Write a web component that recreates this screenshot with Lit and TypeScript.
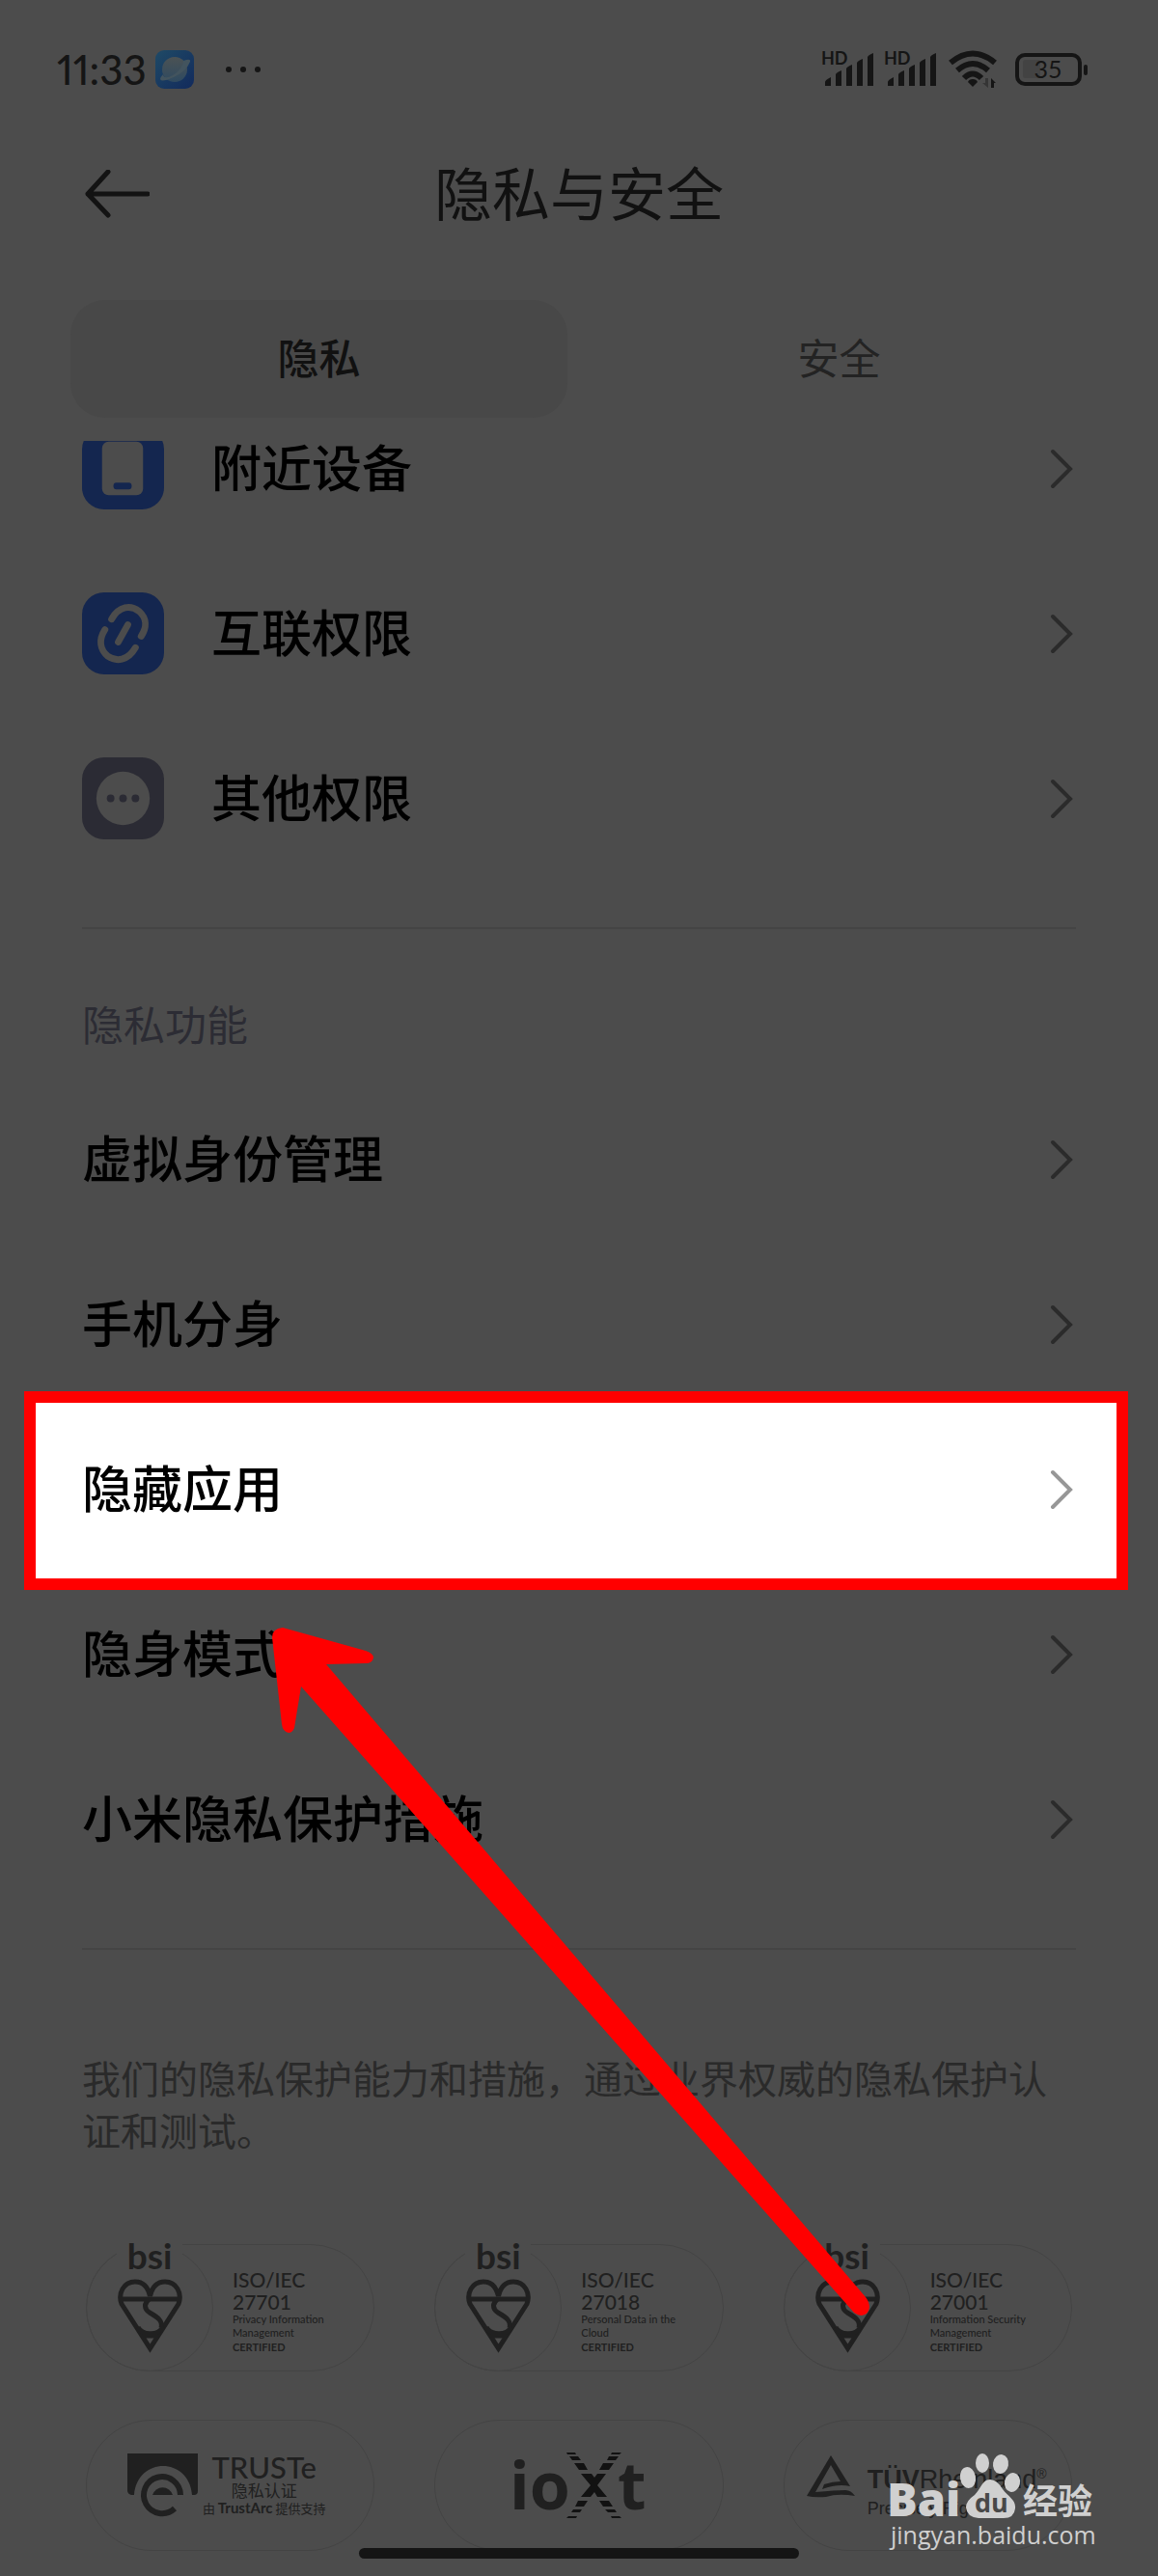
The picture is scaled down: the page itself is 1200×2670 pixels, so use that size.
import { LitElement, html, css, svg } from "lit";
import { customElement, property } from "lit/decorators.js";

const chevron = html`<svg class="chevron" viewBox="0 0 24 42" aria-hidden="true">
  <path d="M3 3 L21 21 L3 39" fill="none" stroke="currentColor" stroke-width="4" stroke-linecap="round" />
</svg>`;

const signal = svg`
  <path d="M3 35 V31 Q3 29 9 26 V35 Z M14 35 V23 Q15 21 20 19 V35 Z M25 35 V17 Q26 15 31 13 V35 Z M36 35 V11 Q37 9 42 7 V35 Z M47 35 V5 Q48 3 53 1 V35 Z" />`;

@customElement("status-bar")
export class StatusBar extends LitElement {
  static styles = css`
    :host {
      display: flex;
      align-items: center;
      justify-content: space-between;
      height: 40px;
      padding: 52px 72px 0 59px;
      color: #151515;
    }
    .left,
    .right {
      display: flex;
      align-items: center;
    }
    .time {
      font: 500 42px/40px Lato, sans-serif;
      font-variant-numeric: proportional-nums;
    }
    .app {
      width: 40px;
      height: 40px;
      margin: 0 32px 0 9px;
    }
    .dots {
      width: 38px;
      height: 8px;
    }
    .right {
      gap: 9px;
    }
    .battery {
      margin-left: 9px;
    }
    svg {
      display: block;
      overflow: visible;
      fill: currentColor;
    }
    text {
      font-family: Lato, sans-serif;
    }
  `;

  private cell() {
    return html`<svg width="56" height="38" viewBox="0 -1 56 38" role="img" aria-label="HD">
      <text x="-1" y="13" font-size="18" font-weight="700">HD</text>
      ${signal}
    </svg>`;
  }

  render() {
    return html`
      <div class="left">
        <span class="time">11:33</span>
        <svg class="app" viewBox="0 0 40 40" aria-hidden="true">
          <defs>
            <linearGradient id="g" x1="0" y1="0" x2="1" y2="1">
              <stop offset="0" stop-color="#1f4a66" />
              <stop offset="1" stop-color="#122a5c" />
            </linearGradient>
            <linearGradient id="p" x1="0" y1="0" x2="0" y2="1">
              <stop offset="0" stop-color="#4b5254" />
              <stop offset="1" stop-color="#2f4a60" />
            </linearGradient>
          </defs>
          <rect width="40" height="40" rx="9" fill="url(#g)" />
          <circle cx="20" cy="20" r="13" fill="url(#p)" />
          <path d="M29 11 Q37 8 36 12 Q32 22 19 28 Q6 34 5 30 Q5 28 8 25 Q9 31 18 26 Q28 20 29 11Z" fill="#43545e" />
        </svg>
        <svg class="dots" viewBox="0 0 38 8" aria-hidden="true">
          <circle cx="4" cy="4" r="3" /><circle cx="19" cy="4" r="3" /><circle cx="34" cy="4" r="3" />
        </svg>
      </div>
      <div class="right">
        ${this.cell()} ${this.cell()}
        <svg width="52" height="42" viewBox="0 0 52 42" aria-hidden="true">
          <g fill="none" stroke="currentColor" stroke-width="6">
            <path d="M3 14 Q26 -5 49 14" />
            <path d="M10 22 Q26 8 42 22" />
            <path d="M17 30 Q26 21 35 30" />
          </g>
          <path d="M26 31 Q30 31 31 34 L26 39 L21 34 Q22 31 26 31Z" />
          <path d="M45 40 V30 L50 35 H48 V40Z" />
          <path d="M42 30 V40 L36 35 H39 V30Z" fill="#353535" />
        </svg>
        <svg class="battery" width="76" height="36" viewBox="0 0 76 36" role="img" aria-label="35%">
          <rect x="8" y="8" width="18" height="19" rx="3" fill="#434343" />
          <rect x="2" y="3" width="65" height="30" rx="8" fill="none" stroke="currentColor" stroke-width="4" />
          <rect x="71" y="13" width="4" height="11" rx="2" />
          <text x="34" y="27" font-size="25" text-anchor="middle">35</text>
        </svg>
      </div>
    `;
  }
}

@customElement("setting-row")
export class SettingRow extends LitElement {
  @property() label = "";
  @property() icon = "";
  @property({ type: Boolean, reflect: true }) focused = false;

  static styles = css`
    :host {
      display: block;
    }
    .row {
      position: relative;
      display: flex;
      align-items: center;
      width: 100%;
      height: 171px;
      padding: 0 88px 0 85px;
      border: 0;
      background: none;
      color: #000;
      font: 500 52px/72px "Noto Sans CJK SC", sans-serif;
      text-align: left;
      cursor: pointer;
    }
    .label {
      flex: 1;
      padding-bottom: 6px;
    }
    .icon {
      width: 85px;
      height: 85px;
      margin-right: 49px;
      flex: none;
    }
    .chevron {
      width: 24px;
      height: 42px;
      color: #2b2b2b;
    }
    :host([focused]) .chevron {
      color: #979797;
    }
    :host([focused]) .row::before {
      content: "";
      position: absolute;
      z-index: -1;
      inset: -16px 31px -19px 25px;
      border: 12px solid #f00;
      background: #fff;
    }
  `;

  private glyph() {
    if (this.icon === "device")
      return html`<svg class="icon" viewBox="0 0 86 86" aria-hidden="true">
        <rect width="86" height="86" rx="23" fill="#14264f" />
        <rect x="21" y="15" width="43" height="56" rx="7" fill="#4c4c4c" />
        <rect x="33" y="58" width="19" height="7" rx="3" fill="#14264f" />
      </svg>`;
    if (this.icon === "link")
      return html`<svg class="icon" viewBox="0 0 86 86" aria-hidden="true">
        <rect width="86" height="86" rx="23" fill="#14264f" />
        <g fill="none" stroke="#4c4c4c" stroke-width="7" stroke-linecap="round">
          <path d="M31 28 C39 14 51 13 60 20 C68 27 68 37 62 46" />
          <path d="M24 39 C17 50 19 60 27 67 C36 73 48 72 56 58" />
          <path d="M48 34 L38 52" />
        </g>
      </svg>`;
    if (this.icon === "more")
      return html`<svg class="icon" viewBox="0 0 86 86" aria-hidden="true">
        <rect width="86" height="86" rx="23" fill="#2b2b34" />
        <circle cx="43" cy="43" r="28" fill="#4c4c4c" />
        <g fill="#2b2b34"><circle cx="30" cy="43" r="4" /><circle cx="43" cy="43" r="4" /><circle cx="56" cy="43" r="4" /></g>
      </svg>`;
    return "";
  }

  render() {
    return html`<button class="row">${this.glyph()}<span class="label">${this.label}</span>${chevron}</button>`;
  }
}

@customElement("cert-badge")
export class CertBadge extends LitElement {
  @property() number = "";
  @property() scope = "";

  static styles = css`
    :host {
      position: relative;
      display: flex;
      height: 132px;
      box-sizing: border-box;
      border: 1px solid #444;
      border-radius: 66px;
      color: #202020;
    }
    .mark {
      position: relative;
      width: 132px;
      height: 132px;
      margin: -1px;
      box-sizing: border-box;
      border: 1px solid #444;
      border-radius: 50%;
      flex: none;
    }
    .bsi {
      position: absolute;
      left: 31px;
      top: -10px;
      width: 68px;
      text-align: center;
      background: #4c4c4c;
      font: 700 37px/42px Lato, sans-serif;
    }
    .heart {
      position: absolute;
      left: 32px;
      top: 35px;
      width: 67px;
      height: 78px;
    }
    .copy {
      padding: 24px 0 0 21px;
      font: 500 11px/14px Lato, sans-serif;
      white-space: pre-line;
    }
    .name {
      margin: 0;
      font-size: 21px;
      line-height: 23px;
      font-weight: 500;
    }
    .certified {
      font-weight: 700;
      line-height: 16px;
    }
  `;

  render() {
    return html`
      <div class="mark">
        <span class="bsi">bsi</span>
        <svg class="heart" viewBox="0 0 67 78" fill="none" stroke="currentColor" stroke-width="5" aria-hidden="true">
          <path d="M33.500 18 C31 7 25 3 18 3 C6 3 0 15 4 26 L33.500 72 L63 26 C67 15 61 3 49 3 C42 3 36 7 33.500 18Z" />
          <path d="M3 21 H64 M33 21 C27 25 27 31 33 35 C42 40 47 44 45 51 M21 50 C25 58 41 60 47 50 M26 59 H41" />
        </svg>
      </div>
      <div class="copy"><p class="name">ISO/IEC
${this.number}</p><div>${this.scope}</div><div class="certified">CERTIFIED</div></div>
    `;
  }
}

@customElement("app-root")
export class AppRoot extends LitElement {
  static styles = css`
    :host {
      position: relative;
      display: block;
      overflow: hidden;
      isolation: isolate;
      background: #4c4c4c;
      font-family: "Noto Sans CJK SC", sans-serif;
      color: #111;
    }
    .header {
      display: grid;
      grid-template-columns: 68px 1fr 68px;
      align-items: center;
      height: 88px;
      margin: 65px 87px 66px;
    }
    .back {
      padding: 0;
      border: 0;
      background: none;
      color: #131313;
    }
    .back svg {
      display: block;
    }
    .title {
      margin: 0;
      padding-bottom: 6px;
      font-size: 60px;
      line-height: 82px;
      font-weight: 400;
      text-align: center;
    }
    .tabs {
      display: grid;
      grid-template-columns: 1fr 1fr;
      gap: 24px;
      margin: 0 73px;
    }
    .tab {
      height: 122px;
      padding: 0 0 6px;
      border: 0;
      border-radius: 36px;
      background: none;
      font: 400 43px/60px "Noto Sans CJK SC", sans-serif;
      color: #232323;
    }
    .tab[aria-selected="true"] {
      background: #484848;
      color: #111;
      font-weight: 500;
    }
    .scroller {
      margin-top: 24px;
      padding-bottom: 26px;
      overflow: hidden;
    }
    .permissions {
      margin-top: -57px;
    }
    .rule {
      height: 2px;
      margin: 48px 85px 0;
      border: 0;
      background: #444;
    }
    .section {
      margin: 67px 85px 26px;
      font-size: 43px;
      line-height: 60px;
      font-weight: 400;
      color: #2c2c34;
    }
    .note {
      margin: 105px 85px 92px;
      font-size: 40px;
      line-height: 54px;
      color: #2a2a2a;
    }
    .badges {
      display: grid;
      grid-template-columns: repeat(3, minmax(0, 1fr));
      gap: 50px 62px;
      margin: 0 89px;
    }
    .badge {
      display: flex;
      align-items: center;
      justify-content: center;
      height: 136px;
      box-sizing: border-box;
      border: 1px solid #444;
      border-radius: 68px;
      color: #202020;
    }
    .badge svg {
      overflow: visible;
      flex: none;
    }
    .truste {
      gap: 5px;
      padding-right: 8px;
    }
    .truste-copy {
      text-align: center;
      font-size: 13px;
      line-height: 19px;
      white-space: nowrap;
    }
    .truste-copy .brand {
      font: 500 31px/28px Lato, sans-serif;
    }
    .truste-copy .mid {
      font-size: 17px;
    }
    .arc {
      font: 700 15px/19px Lato, sans-serif;
    }
    .ioxt text {
      font: 700 68px "Open Sans", sans-serif;
    }
    .tuv {
      align-items: flex-start;
      justify-content: flex-start;
      gap: 13px;
      padding: 36px 0 0 23px;
      font: 400 27px/30px "Liberation Sans", sans-serif;
      white-space: nowrap;
    }
    .tuv-copy {
      padding-top: 10px;
    }
    .tuv .small {
      font-size: 18px;
    }
    .tuv sup {
      font-size: 14px;
      line-height: 0;
    }
    .arrow {
      position: absolute;
      left: 281px;
      top: 1687px;
      width: 624px;
      height: 716px;
      pointer-events: none;
    }
    .home {
      position: absolute;
      left: 31%;
      right: 31%;
      bottom: 18px;
      height: 11px;
      border-radius: 6px;
      background: #151515;
    }
    .watermark {
      position: absolute;
      right: 62px;
      bottom: 26px;
      width: 216px;
      height: 112px;
      overflow: visible;
    }
  `;

  render() {
    return html`
      <status-bar></status-bar>
      <header class="header">
        <button class="back" aria-label="返回">
          <svg width="68" height="50" viewBox="0 0 68 50" fill="none" stroke="currentColor" stroke-width="5" stroke-linecap="round" stroke-linejoin="round">
            <path d="M25 2 L4 25 L25 47 M4 25 H66" />
          </svg>
        </button>
        <h1 class="title">隐私与安全</h1>
      </header>
      <div class="tabs" role="tablist">
        <button class="tab" role="tab" aria-selected="true">隐私</button>
        <button class="tab" role="tab" aria-selected="false">安全</button>
      </div>
      <main class="scroller">
        <div class="permissions">
          <setting-row icon="device" label="附近设备"></setting-row>
          <setting-row icon="link" label="互联权限"></setting-row>
          <setting-row icon="more" label="其他权限"></setting-row>
        </div>
        <hr class="rule" />
        <h2 class="section">隐私功能</h2>
        <setting-row label="虚拟身份管理"></setting-row>
        <setting-row label="手机分身"></setting-row>
        <setting-row label="隐藏应用" focused></setting-row>
        <setting-row label="隐身模式"></setting-row>
        <setting-row label="小米隐私保护措施"></setting-row>
        <hr class="rule" />
        <p class="note">我们的隐私保护能力和措施，通过业界权威的隐私保护认证和测试。</p>
        <div class="badges">
          <cert-badge number="27701" .scope=${"Privacy Information\nManagement"}></cert-badge>
          <cert-badge number="27018" .scope=${"Personal Data in the\nCloud"}></cert-badge>
          <cert-badge number="27001" .scope=${"Information Security\nManagement"}></cert-badge>
          <div class="badge truste">
            <svg width="73" height="66" viewBox="0 0 73 66" fill="currentColor" aria-hidden="true">
              <path d="M0 0 H73 V39 Q73 43 69 43 H67 C64 3 10 3 7 43 H4 Q0 42 0 38Z" />
              <path d="M26 43 A11 11 0 0 1 47 43Z" />
              <path d="M55 43 A19 19 0 1 0 49 57" fill="none" stroke="currentColor" stroke-width="6" />
            </svg>
            <div class="truste-copy">
              <div class="brand">TRUSTe</div>
              <div class="mid">隐私认证</div>
              <div>由 <span class="arc">TrustArc</span> 提供支持</div>
            </div>
          </div>
          <div class="badge ioxt">
            <svg width="136" height="68" viewBox="0 0 136 68" fill="currentColor" role="img" aria-label="ioXt">
              <text x="-4" y="59">io</text>
              <path fill="#121212" d="M55 0 H64 L65 2 H56Z M58 4 H67 L70 8 H61Z M63 11 H73 L77 18 H68Z M70 22 H81 L84 26 L87 22 H96 L87 34 L97 46 H87 L84 41 L80 46 H70 L80 34Z M102 0 H112 L110 2 H101Z M99 4 H109 L106 8 H97Z M93 11 H104 L99 18 H89Z M67 50 H77 L73 56 H64Z M62 59 H71 L69 62 H60Z M57 66 H66 L65 68 H55Z M89 50 H99 L103 56 H93Z M95 59 H105 L107 62 H98Z M101 66 H110 L112 68 H102Z" />
              <text x="108" y="59">t</text>
            </svg>
          </div>
          <div class="badge tuv">
            <svg width="50" height="44" viewBox="0 0 50 44" fill="currentColor" aria-hidden="true">
              <path d="M25 0 L45 32 Q32 29 16 35 L18 30 Q27 27 35 27 L25 10 L9 38 Q30 36 40 36 Q46 36 50 42 Q32 39 20 43 Q8 44 0 42Z" />
            </svg>
            <div class="tuv-copy"><div><b>TÜV</b>Rheinland<sup>®</sup></div><div class="small">Precisely Right.</div></div>
          </div>
        </div>
      </main>
      <svg class="arrow" viewBox="0 0 624 716" fill="#f00" aria-hidden="true">
        <path d="M12 0 L98 24 Q106 27 106 31 Q105 37 98 37 L57 38 L616 694 C625 705 617 719 604 710 L31 61 L24 104 Q22 109 18 109 Q12 108 11 100 L1 10 Q1 1 12 0Z" />
      </svg>
      <div class="home"></div>
      <svg class="watermark" viewBox="0 0 216 112" fill="#d0d0d0" role="img" aria-label="Baidu 经验 jingyan.baidu.com">
        <text x="-3" y="76" font-family="Open Sans, sans-serif" font-weight="800" font-size="47">Bai</text>
        <ellipse cx="81" cy="36" rx="8" ry="11" transform="rotate(-10 81 36)" />
        <ellipse cx="96" cy="21" rx="7" ry="10" />
        <ellipse cx="115" cy="22" rx="8" ry="10" transform="rotate(10 115 22)" />
        <ellipse cx="127" cy="41" rx="8" ry="10" transform="rotate(12 127 41)" />
        <path d="M104 38 Q111 38 117 48 C123 56 131 59 130 68 Q129 78 118 78 H92 Q80 77 79 67 Q79 60 88 54 C94 48 96 38 104 38Z" />
        <text x="88" y="72" font-family="Open Sans, sans-serif" font-weight="700" font-size="27" fill="#484848">du</text>
        <text x="138" y="74" font-family="Noto Sans CJK SC, sans-serif" font-weight="700" font-size="36">经验</text>
        <text x="1" y="105" font-family="Open Sans, sans-serif" font-weight="500" font-size="25">jingyan.baidu.com</text>
      </svg>
    `;
  }
}
